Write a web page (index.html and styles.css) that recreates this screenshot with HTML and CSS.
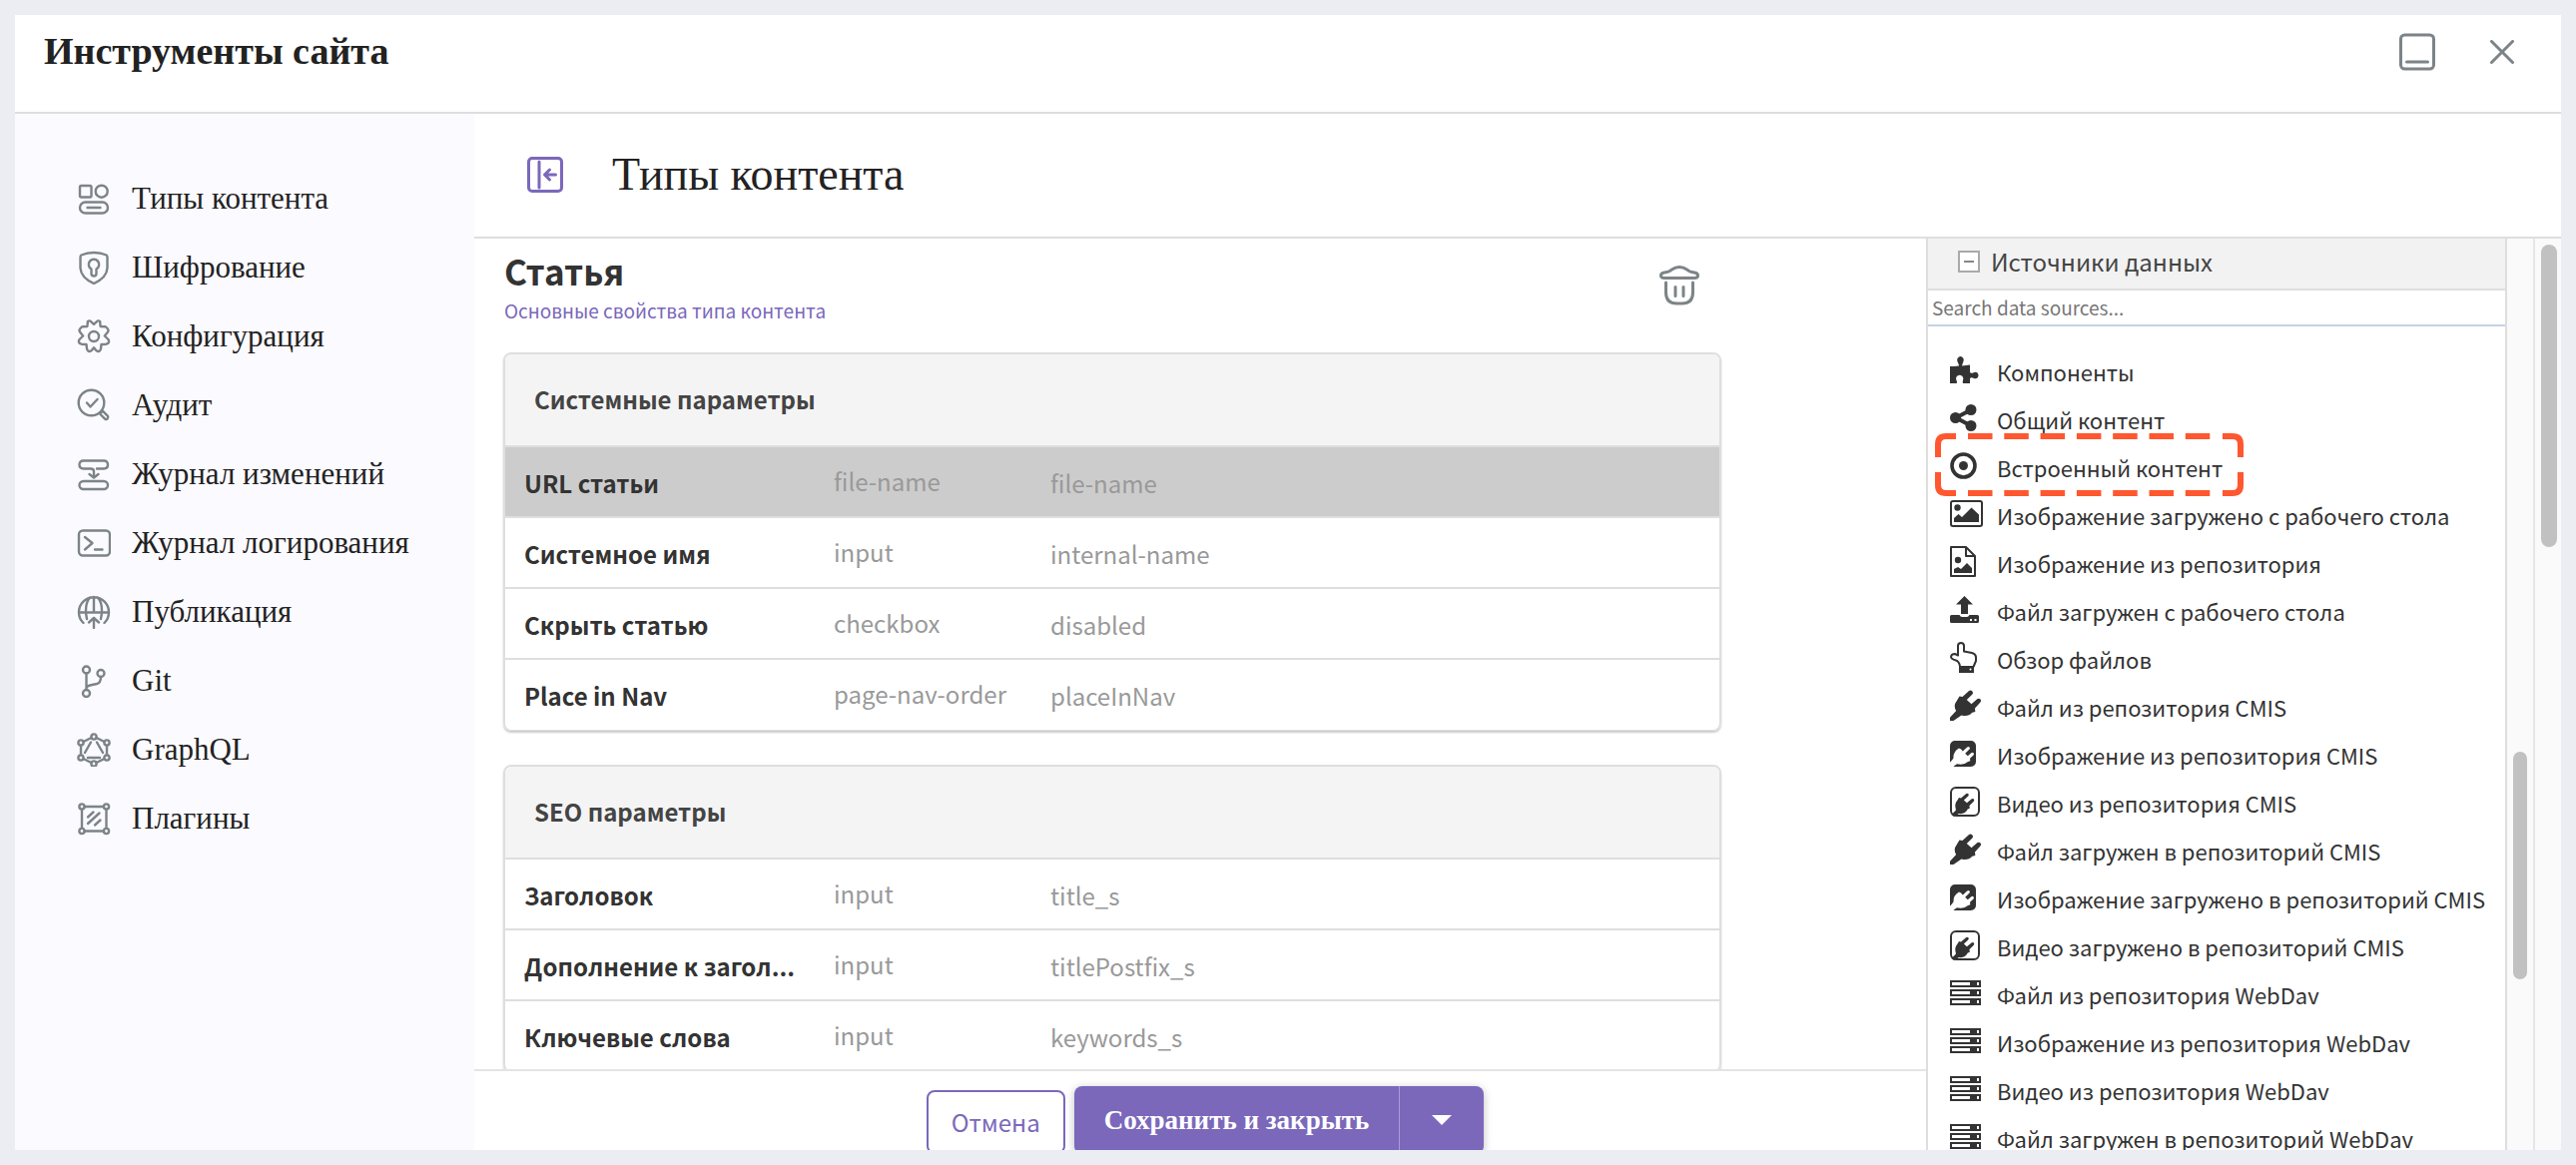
FILE: index.html
```html
<!DOCTYPE html>
<html lang="ru">
<head>
<meta charset="utf-8">
<title>Инструменты сайта</title>
<link rel="stylesheet" href="styles.css">
</head>
<body>
<svg class="sprite" aria-hidden="true">
  <symbol id="plug" viewBox="0 0 31 31"><path fill="currentColor" d="M9.500 6.500 12.500 7 18.800 1.200q1.800-1.300 3.400 0 1.500 1.700.2 3.400L16.800 10l4.700 4.300 6-5.200q1.800-1 3 .4 1.100 1.500-.1 3L25 18.600l.3 3.400-3 .8Q18 27.500 11.500 25.500L3.500 31H0v-3.200l6.200-6.700Q3 16 6.500 11.500z"/></symbol>
  <symbol id="plug-solid" viewBox="0 0 26 26"><path fill="currentColor" d="M5 0h16a5 5 0 0 1 5 5v16a5 5 0 0 1-5 5H5q-1 0-1.500-.3L7 23.300q7 1.500 11-2.300l2.300-.8-.3-2.500 3.500-3.200q1-1.300 0-2.300-1-.8-2.200 0L17.800 15.300l-2.600-2.500 4.300-4.200q.9-1.300 0-2.200-1.100-.9-2.300 0l-4.400 4-1.700-1.900L9 7.500Q3 11 3.500 17.500L.3 21.500 0 21V5a5 5 0 0 1 5-5z"/></symbol>
  <symbol id="plug-box" viewBox="0 0 30 30"><rect x="1" y="1" width="28" height="28" rx="5" fill="none" stroke="currentColor" stroke-width="2"/><path fill="currentColor" d="m9 11 2 .5 5.300-4.500q1.300-.8 2.200.3.700 1.100-.3 2.300L13.900 13.600l3 2.700 4.900-4q1.200-.7 2.200.3.700 1.200-.4 2.300L19.500 19l.3 2.800-2 .8Q15 28 9 27L4 30 1.500 28l4.500-4.500Q4 17 7.500 13.500z"/></symbol>
  <symbol id="server" viewBox="0 0 31 26"><path fill="currentColor" fill-rule="evenodd" d="M0 0h31v7H0zM2 2v3h18V2zM27 2v3h2V2zM0 9h31v7H0zM2 11v3h18v-3zM27 11v3h2v-3zM0 18h31v7H0zM2 20v3h18v-3zM27 20v3h2v-3z"/></symbol>
</svg>
<main class="window">
  <header class="window-head">
    <h1 class="window-title">Инструменты сайта</h1>
    <div class="window-actions">
      <button class="icon-btn" aria-label="Свернуть"><svg width="36" height="38" viewBox="0 0 36 38"><rect x="1.500" y="2" width="33" height="34" rx="4"/><path d="M7.500 29h21"/></svg></button>
      <button class="icon-btn" aria-label="Закрыть"><svg width="24" height="24" viewBox="0 0 24 24"><path d="M1.500 1.500l21 21M22.500 1.500l-21 21"/></svg></button>
    </div>
  </header>
  <div class="window-body">
    <nav class="sidebar">
      <ul class="menu">
        <li><a class="menu-link" href="#types"><svg viewBox="0 0 34 34"><rect x="3" y="4" width="11.500" height="11.500" rx="1.500"/><circle cx="24.700" cy="9.700" r="6"/><rect x="3" y="20.500" width="28" height="11" rx="5.500"/><path d="M10.500 26h13"/></svg>Типы контента</a></li>
        <li><a class="menu-link" href="#encryption"><svg viewBox="0 0 34 34"><path d="M17 2Q10 2 4.500 4.500 3.500 5 3.500 6.500v11Q4 27 17 33 30 27 30.500 17.500v-11q0-1.500-1-2Q24 2 17 2z"/><path d="M14.500 18.500a5.200 5.200 0 1 1 5 0V23a2.500 2.500 0 0 1-5 0z"/></svg>Шифрование</a></li>
        <li><a class="menu-link" href="#config"><svg viewBox="0 0 34 34"><circle cx="17" cy="17" r="5"/><path d="M10.900 1.900Q12 1 13.500 1.600L17 4.800l3.500-3.200Q22 1 23.100 1.900L23.600 7l5 .2Q30 8 31 9.600q1 1.500 0 3L27.800 16.500l3.600 3.500q1 1.500.5 3-.5 1.200-2.500 1.700l-4.900.3-.6 4.800q-.5 1.800-2 2.200-1.700.2-2.900-1.200L17 28.200l-2 2.600q-1.200 1.400-2.900 1.200-1.500-.4-2-2.200L9.500 25l-4.900-.3q-2-.5-2.500-1.700-.5-1.500.5-3l3.600-3.500L3 12.600q-1-1.500 0-3Q4 8 5.400 7.200L10.400 7z"/></svg>Конфигурация</a></li>
        <li><a class="menu-link" href="#audit"><svg viewBox="0 0 34 34"><circle cx="14.500" cy="14.500" r="12.800"/><path d="m10 14.500 3.500 4 7-7.500M23 25.500l2.800-2.800 5.200 5.200q.8 1.500-.4 2.600-1 1-2.500.2z"/></svg>Аудит</a></li>
        <li><a class="menu-link" href="#history"><svg viewBox="0 0 34 34"><path d="M20 11.500h7q4 0 4-4t-4-4H6.500q-4 0-4 4t4 4H14q3 0 3 3V20M12.500 17l4.500 3.500 4.500-3.500"/><rect x="2.500" y="24" width="28.500" height="8" rx="4"/></svg>Журнал изменений</a></li>
        <li><a class="menu-link" href="#logging"><svg viewBox="0 0 34 34"><rect x="2" y="4.500" width="31" height="25" rx="4"/><path d="m8 11 7.500 6L8 23.500M18 23.500h7.500"/></svg>Журнал логирования</a></li>
        <li><a class="menu-link" href="#publishing"><svg viewBox="0 0 34 34"><path d="M6.500 28A15 15 0 1 1 27.500 28M2 17.500h30M17 2v15.500M10 24Q7 10 13 2.500M24 24Q27 10 21 2.500M17 33V23M12 27.500l5-4.500 5 4.500"/></svg>Публикация</a></li>
        <li><a class="menu-link" href="#git"><svg viewBox="0 0 34 34"><circle cx="9.500" cy="6" r="3.500"/><circle cx="24" cy="9.500" r="3.500"/><circle cx="9.500" cy="29.500" r="3.500"/><path d="M9.500 9.500V26M24 13q0 6-4 7l-7 1.500q-3 .8-3.500 2.500"/></svg>Git</a></li>
        <li><a class="menu-link" href="#graphql"><svg viewBox="0 0 34 34"><circle cx="17" cy="4" r="2.600"/><circle cx="17" cy="31" r="2.600"/><circle cx="4" cy="10" r="2.600"/><circle cx="30" cy="10" r="2.600"/><circle cx="4" cy="25" r="2.600"/><circle cx="30" cy="25" r="2.600"/><path d="M14.500 5 6.500 9M19.500 5l8 4M4 12.600v9.800M30 12.600v9.800M6.500 26l8 4M27.500 26l-8 4M14 9.500 8 20M20 9.500 26 20M11 25h12"/></svg>GraphQL</a></li>
        <li><a class="menu-link" href="#plugins"><svg viewBox="0 0 34 34"><circle cx="5" cy="5" r="2.600"/><circle cx="29.500" cy="5" r="2.600"/><circle cx="5" cy="29.500" r="2.600"/><circle cx="29.500" cy="29.500" r="2.600"/><path d="M7.600 5h19.300M7.600 29.500h19.300M5 7.600v19.300M29.500 7.600v19.300M11 15.500l5.500-5M11 22l11.500-10.500M18 23.500l5.500-5"/></svg>Плагины</a></li>
      </ul>
    </nav>
    <section class="page">
      <header class="page-head">
        <button class="icon-btn accent" aria-label="Скрыть меню"><svg width="36" height="36" viewBox="0 0 36 36"><rect x="1.500" y="1.500" width="33" height="33" rx="3.500"/><path d="M12 5v26M28.500 18H18M22.500 13 17.500 18l5 5"/></svg></button>
        <h2 class="page-title">Типы контента</h2>
      </header>
      <div class="page-body">
        <div class="editor">
          <div class="canvas">
            <div class="type-head">
              <div>
                <h3 class="type-name">Статья</h3>
                <a class="type-props" href="#props">Основные свойства типа контента</a>
              </div>
              <button class="icon-btn" aria-label="Удалить"><svg width="40" height="40" viewBox="0 0 40 40"><path d="M5 12.500q-3.500 0-3.500-2.500T5 7Q10 6.500 12.500 4 16 1.500 20 1.500T27.500 4Q30 6.500 35 7q3.500.5 3.500 3T35 12.500zM6.500 17v10q0 11 11 11h5q11 0 11-11V17M16 21.500v9M24 21.500v9"/></svg></button>
            </div>
            <div class="card">
              <table class="fields">
                <colgroup><col class="col-name"><col class="col-kind"><col></colgroup>
                <thead><tr><th colspan="3">Системные параметры</th></tr></thead>
                <tbody>
                  <tr class="selected"><th scope="row">URL статьи</th><td class="kind">file-name</td><td>file-name</td></tr>
                  <tr><th scope="row">Системное имя</th><td class="kind">input</td><td>internal-name</td></tr>
                  <tr><th scope="row">Скрыть статью</th><td class="kind">checkbox</td><td>disabled</td></tr>
                  <tr><th scope="row">Place in Nav</th><td class="kind">page-nav-order</td><td>placeInNav</td></tr>
                </tbody>
              </table>
            </div>
            <div class="card">
              <table class="fields">
                <colgroup><col class="col-name"><col class="col-kind"><col></colgroup>
                <thead><tr><th colspan="3">SEO параметры</th></tr></thead>
                <tbody>
                  <tr><th scope="row">Заголовок</th><td class="kind">input</td><td>title_s</td></tr>
                  <tr><th scope="row">Дополнение к загол...</th><td class="kind">input</td><td>titlePostfix_s</td></tr>
                  <tr><th scope="row">Ключевые слова</th><td class="kind">input</td><td>keywords_s</td></tr>
                </tbody>
              </table>
            </div>
          </div>
          <footer class="actions">
            <button class="cancel">Отмена</button>
            <div class="save-group">
              <button class="save">Сохранить и закрыть</button>
              <button class="save-more" aria-label="Другие варианты"><svg width="20" height="10" viewBox="0 0 20 10"><path fill="currentColor" d="M0 0h20L10 10z"/></svg></button>
            </div>
          </footer>
        </div>
        <aside class="sources">
          <h3 class="sources-head"><svg width="22" height="22" viewBox="0 0 22 22"><path fill="#fff" stroke="#aaa" stroke-width="2" d="M1 1h20v20H1z"/><path stroke="#888" stroke-width="2" d="M6 11h10"/></svg>Источники данных</h3>
          <input class="search" type="text" placeholder="Search data sources..." aria-label="Search data sources">
          <ul class="source-list">
            <li><svg width="29" height="27" viewBox="0 0 29 27"><path fill="currentColor" d="M0 10h4l5-.5q0-1.500-1-3Q6.500 4 7.500 2 9 0 10.500 0t3 2q.8 2.500-.5 4.500-1 1.500-.8 3L20 8.500v7.500q1.500 1.500 3.500.2Q26 15 27.500 16.500q1 1.200 1 2.500t-1 2.500q-1.500 1.500-4 .3-2-1.300-3.500.2v5h-7q-.6-1.500 0-3 1-2-.5-4-1.500-1.300-3-1.200-2 .1-3 1.700-1 1.500 0 3.500.8 1.500.3 3H0z"/></svg>Компоненты</li>
            <li><svg width="27" height="27" viewBox="0 0 27 27"><path stroke="currentColor" stroke-width="4" d="M21 5.500 6 13.500l15 8"/><g fill="currentColor"><circle cx="21" cy="5.500" r="5.500"/><circle cx="5.500" cy="13.500" r="5.500"/><circle cx="21" cy="21.500" r="5.500"/></g></svg>Общий контент</li>
            <li class="marked"><svg width="27" height="27" viewBox="0 0 27 27"><circle cx="13.500" cy="13.500" r="11.500" stroke="currentColor" stroke-width="3.600"/><circle cx="13.500" cy="13.500" r="4.500" fill="currentColor"/></svg>Встроенный контент
              <svg class="marker" width="309" height="63" viewBox="0 0 309 63"><path d="M21 3H11q-8 0-8 8v13M288 3h10q8 0 8 8v13M21 60H11q-8 0-8-8V39M288 60h10q8 0 8-8V39"/><path stroke-dasharray="24.500 11.800" d="M33 3h243M33 60h243"/></svg></li>
            <li><svg width="33" height="27" viewBox="0 0 33 27"><rect x="1" y="1" width="31" height="25" rx="2" stroke="currentColor" stroke-width="2"/><path fill="currentColor" d="M4 22v-4l4.500-4 3.500 3L21.500 7.500 29 14.500V22z"/><circle cx="7.500" cy="7.500" r="3.200" fill="currentColor"/></svg>Изображение загружено с рабочего стола</li>
            <li><svg width="26" height="31" viewBox="0 0 26 31"><path stroke="currentColor" stroke-width="2" stroke-linejoin="round" d="M1 1h15l9 9v20H1zM16 1v9h9"/><path fill="currentColor" d="M4 27v-4l4-2 3 2 6-6 5 5v5z"/><circle cx="8" cy="14" r="3.200" fill="currentColor"/></svg>Изображение из репозитория</li>
            <li><svg width="29" height="28" viewBox="0 0 29 28"><path fill="currentColor" fill-rule="evenodd" d="M14.500 0 23 8.500h-5V18h-7V8.500H6zM1.500 19h8q1 2 2.500 2h5q1.500 0 2.500-2h8q1.500 0 1.500 1.500v5q0 1.500-1.500 1.500h-26Q0 27 0 25.500v-5Q0 19 1.500 19zM20 23v2h2v-2zM24.500 23v2h2v-2z"/></svg>Файл загружен с рабочего стола</li>
            <li><svg width="27" height="31" viewBox="0 0 27 31"><path stroke="currentColor" stroke-width="2" stroke-linejoin="round" d="M10 24Q9 19.500 6 18.500 1 17 1 15q.3-3 4-3l3 1.500V3.500Q8.500 1 11 1t3 2.500v6l8 1.500q3.500.8 4 4v4l-2.500 6"/><path fill="currentColor" d="M9 24h15v7H9z"/><circle cx="20.500" cy="27.500" r="1" fill="#fff"/></svg>Обзор файлов</li>
            <li><svg width="31" height="31"><use href="#plug"/></svg>Файл из репозитория CMIS</li>
            <li><svg width="26" height="26"><use href="#plug-solid"/></svg>Изображение из репозитория CMIS</li>
            <li><svg width="30" height="30"><use href="#plug-box"/></svg>Видео из репозитория CMIS</li>
            <li><svg width="31" height="31"><use href="#plug"/></svg>Файл загружен в репозиторий CMIS</li>
            <li><svg width="26" height="26"><use href="#plug-solid"/></svg>Изображение загружено в репозиторий CMIS</li>
            <li><svg width="30" height="30"><use href="#plug-box"/></svg>Видео загружено в репозиторий CMIS</li>
            <li><svg width="31" height="26"><use href="#server"/></svg>Файл из репозитория WebDav</li>
            <li><svg width="31" height="26"><use href="#server"/></svg>Изображение из репозитория WebDav</li>
            <li><svg width="31" height="26"><use href="#server"/></svg>Видео из репозитория WebDav</li>
            <li><svg width="31" height="26"><use href="#server"/></svg>Файл загружен в репозиторий WebDav</li>
          </ul>
        </aside>
        <div class="track inner"><div class="thumb"></div></div>
        <div class="track outer"><div class="thumb"></div></div>
      </div>
    </section>
  </div>
</main>
</body>
</html>
```
FILE: styles.css
```css
* { box-sizing: border-box; }
body {
  margin: 0;
  padding: 15px;
  height: 100vh;
  background: #ecedf2;
  color: #333;
  font-family: "Noto Sans CJK KR", "Noto Sans", sans-serif;
}
h1, h2, h3, ul { margin: 0; padding: 0; }
ul { list-style: none; }
button { font: inherit; cursor: pointer; }
svg { display: block; fill: none; flex: none; }
.sprite { position: absolute; width: 0; height: 0; }

.window {
  display: flex;
  flex-direction: column;
  height: 100%;
  background: #fff;
  overflow: hidden;
}
.window-head {
  display: flex;
  flex: none;
  justify-content: space-between;
  align-items: flex-start;
  height: 99px;
  padding: 16px 47px 0 29px;
  border-bottom: 2px solid #dedede;
}
.window-title {
  font: bold 38px/40px "Liberation Serif", serif;
  color: #222;
}
.window-actions { display: flex; align-items: center; gap: 55px; height: 42px; }
.icon-btn {
  display: block;
  padding: 0;
  border: 0;
  background: none;
  color: #7c8487;
}
.icon-btn svg {
  stroke: currentColor;
  stroke-width: 3;
  stroke-linecap: round;
  stroke-linejoin: round;
}
.icon-btn.accent { color: #7b68bb; }

.window-body { display: flex; flex: 1; min-height: 0; }
.sidebar { flex: none; width: 460px; padding: 50px 0 0 62px; background: #fbfaff; }
.menu-link {
  display: flex;
  align-items: center;
  gap: 21px;
  height: 69px;
  font: 31px/36px "Liberation Serif", serif;
  color: #222;
  text-decoration: none;
}
.menu-link svg {
  width: 34px;
  height: 34px;
  stroke: #7c8487;
  stroke-width: 2.4;
  stroke-linecap: round;
  stroke-linejoin: round;
}

.page { display: flex; flex: 1; flex-direction: column; min-width: 0; }
.page-head {
  display: flex;
  flex: none;
  align-items: center;
  gap: 49px;
  height: 125px;
  padding: 0 0 1px 53px;
  border-bottom: 2px solid #dedede;
}
.page-title { font: 46px/52px "Liberation Serif", serif; color: #222; }
.page-body { display: flex; flex: 1; min-height: 0; }

.editor { display: flex; flex: 1; flex-direction: column; min-width: 0; }
.canvas { flex: 1; min-height: 0; padding: 9px 205px 0 29px; overflow: hidden; }
.type-head { display: flex; justify-content: space-between; height: 105px; padding: 0 22px 0 1px; }
.type-head .icon-btn { height: 40px; margin-top: 18px; }
.type-name { font-size: 35px; line-height: 46px; }
.type-props { display: block; font-size: 19px; line-height: 34px; color: #7b68bb; text-decoration: none; }
.card {
  margin-bottom: 34px;
  border: 2px solid #dedede;
  border-bottom-width: 1px;
  border-radius: 8px;
  box-shadow: 0 2px 2px #ccc;
  overflow: hidden;
}
.fields { width: 100%; table-layout: fixed; border-collapse: collapse; font-size: 24px; line-height: 36px; }
.col-name { width: 329px; }
.col-kind { width: 217px; }
.fields th, .fields td {
  height: 71px;
  padding: 2px 0 0;
  border-bottom: 2px solid #dedede;
  overflow: hidden;
  text-align: left;
  text-overflow: ellipsis;
  white-space: nowrap;
}
.fields thead th { height: 92px; padding: 0 0 1px 29px; background: #f4f4f4; color: #444; }
.fields tbody th { padding-left: 19px; }
.fields td { color: #999; }
.fields .kind { padding: 0 0 2px; }
.fields tbody tr:last-child > * { border-bottom: 0; }
.fields .selected { background: #ccc; }

.actions {
  display: flex;
  flex: none;
  justify-content: center;
  align-items: flex-start;
  gap: 9px;
  height: 81px;
  padding-left: 10px;
  border-top: 2px solid #e4e4e4;
  overflow: hidden;
}
.cancel {
  flex: none;
  height: 64px;
  margin-top: 19px;
  padding: 0 23px 2px;
  border: 2px solid #7b68bb;
  border-radius: 8px;
  background: #fff;
  color: #7b68bb;
  font-size: 24px;
}
.save-group {
  display: flex;
  flex: none;
  height: 68px;
  margin-top: 15px;
  border-radius: 8px;
  background: #7b68bb;
  color: #fff;
  box-shadow: 0 2px 8px #0004;
}
.save-group button { border: 0; background: none; color: #fff; }
.save-group .save { padding: 0 30px; font: bold 27px/36px "Liberation Serif", serif; }
.save-group .save-more { padding: 0 32px; border-left: 1px solid #a99cd5; }

.sources {
  flex: none;
  width: 582px;
  border: solid #dedede;
  border-width: 0 2px;
  overflow: hidden;
}
.sources-head {
  display: flex;
  gap: 11px;
  align-items: center;
  height: 52px;
  padding: 0 0 5px 30px;
  border-bottom: 2px solid #dedede;
  background: #f2f2f2;
  color: #444;
  font-size: 24px;
  font-weight: 400;
}
.search {
  display: block;
  width: 100%;
  height: 36px;
  padding: 0 4px 1px;
  border: 0;
  border-bottom: 2px solid #c5d3e3;
  font: 19px "Noto Sans CJK KR", sans-serif;
}
.search::placeholder { color: #777; }
.source-list { padding-top: 21px; font-size: 22px; line-height: 48px; }
.source-list li {
  position: relative;
  display: grid;
  grid-template-columns: 47px 1fr;
  align-items: center;
  height: 48px;
  padding-left: 22px;
  white-space: nowrap;
}
.source-list svg { margin-bottom: 3px; }
.marker {
  position: absolute;
  top: -10px;
  left: 7px;
  stroke: #ff572f;
  stroke-width: 6;
}

.track { flex: none; background: #fafafa; }
.track.inner { width: 28px; padding: 514px 6px 0; border-right: 2px solid #e6e6e6; }
.track.outer { width: 26px; padding: 6px 4px 0 6px; }
.thumb { height: 303px; border-radius: 8px; background: #c1c1c1; }
.inner .thumb { height: 228px; }
```
